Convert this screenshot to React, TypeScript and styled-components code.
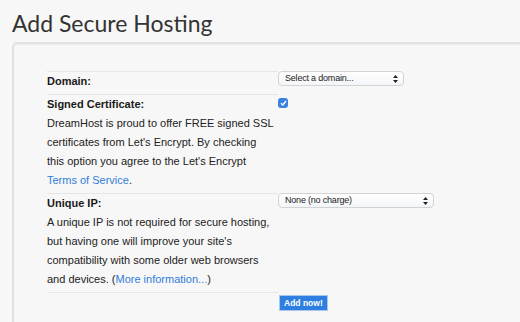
import React from "react";
import styled, { createGlobalStyle } from "styled-components";

const GlobalStyle = createGlobalStyle`
    html, body {
        margin: 0;
        padding: 0;
        background: #f7f7f7;
        overflow: hidden;
    }

    body {
        font-family: "Liberation Sans", Arial, sans-serif;
        color: #222;
    }
`;

const PageStyled = styled.div`
    width: 520px;
    height: 322px;
    overflow: hidden;
`;

const TitleStyled = styled.h1`
    margin: 0;
    padding: 9px 0 0 12px;
    height: 42px;
    box-sizing: border-box;
    font-family: Lato, "Liberation Sans", sans-serif;
    font-size: 23px;
    font-weight: normal;
    line-height: 28px;
    color: #333;
`;

const PanelStyled = styled.div`
    margin-left: 12px;
    width: 560px;
    height: 320px;
    box-sizing: border-box;
    border: 2px solid #e1e1e1;
    border-radius: 5px;
    background: #f7f7f7;
    box-shadow: inset 0 1px 2px rgba(0, 0, 0, .05);
    padding: 28px 0 0 33px;
`;

const FormGridStyled = styled.div`
    display: grid;
    grid-template-columns: 231px auto;
    font-size: 11px;
    line-height: 19px;
`;

const LabelCellStyled = styled.div`
    border-top: 1px solid #e6e6e6;
    padding-bottom: 4px;
    margin-top: -1px;
    white-space: nowrap;

    & > h4 {
        margin: 0;
        font-size: 11px;
        font-weight: bold;
        color: #1a1a1a;
    }

    & > p {
        margin: 0;
    }

    a {
        color: #2f7dd7;
        text-decoration: none;
    }
`;

const ControlCellStyled = styled.div<{ $top: number }>`
    padding-top: ${p => p.$top}px;
    margin-top: -1px;
`;

const SelectStyled = styled.div<{ $width: number }>`
    display: flex;
    align-items: center;
    justify-content: space-between;
    width: ${p => p.$width}px;
    height: 15px;
    box-sizing: border-box;
    padding: 0 5px 0 6px;
    border: 1px solid #d3d3d3;
    border-radius: 4px;
    background: linear-gradient(#ffffff, #f3f5f8);
    font-size: 9px;
    letter-spacing: -0.2px;
    line-height: 13px;
    color: #222;

    svg {
        flex-shrink: 0;
    }
`;

const CheckboxStyled = styled.div`
    width: 10px;
    height: 10px;
    border-radius: 3px;
    background: #3a82e0;
    display: flex;
    align-items: center;
    justify-content: center;
`;

const ButtonStyled = styled.button`
    display: block;
    height: 16px;
    padding: 0 4px;
    margin-left: 1px;
    border: 1px solid #a9c7ee;
    background: #2e7fe0;
    color: #fff;
    font-family: "Liberation Sans", sans-serif;
    font-size: 8.5px;
    font-weight: bold;
    line-height: 14px;
    cursor: pointer;
`;

function Arrows() {
    return (
        <svg width="5" height="8" viewBox="0 0 5 8">
            <path d="M2.5 0 L5 3 H0 Z M2.5 8 L5 5 H0 Z" fill="#222" />
        </svg>
    );
}

export default function App() {
    return (
        <PageStyled>
            <GlobalStyle />
            <TitleStyled>Add Secure Hosting</TitleStyled>
            <PanelStyled>
                <FormGridStyled>
                    <LabelCellStyled>
                        <h4>Domain:</h4>
                    </LabelCellStyled>
                    <ControlCellStyled $top={0}>
                        <SelectStyled $width={126}>
                            <span>Select a domain...</span>
                            <Arrows />
                        </SelectStyled>
                    </ControlCellStyled>

                    <LabelCellStyled>
                        <h4>Signed Certificate:</h4>
                        <p>
                            DreamHost is proud to offer FREE signed SSL<br />
                            certificates from Let's Encrypt. By checking<br />
                            this option you agree to the Let's Encrypt<br />
                            <a href="#">Terms of Service</a>.
                        </p>
                    </LabelCellStyled>
                    <ControlCellStyled $top={4}>
                        <CheckboxStyled>
                            <svg width="7" height="6" viewBox="0 0 7 6">
                                <path d="M1 3.2 L2.8 5 L6 1" stroke="#fff" strokeWidth="1.4" fill="none" />
                            </svg>
                        </CheckboxStyled>
                    </ControlCellStyled>

                    <LabelCellStyled>
                        <h4>Unique IP:</h4>
                        <p>
                            A unique IP is not required for secure hosting,<br />
                            but having one will improve your site's<br />
                            compatibility with some older web browsers<br />
                            and devices. (<a href="#">More information...</a>)
                        </p>
                    </LabelCellStyled>
                    <ControlCellStyled $top={0}>
                        <SelectStyled $width={156}>
                            <span>None (no charge)</span>
                            <Arrows />
                        </SelectStyled>
                    </ControlCellStyled>

                    <LabelCellStyled />
                    <ControlCellStyled $top={3}>
                        <ButtonStyled>Add now!</ButtonStyled>
                    </ControlCellStyled>
                </FormGridStyled>
            </PanelStyled>
        </PageStyled>
    );
}
